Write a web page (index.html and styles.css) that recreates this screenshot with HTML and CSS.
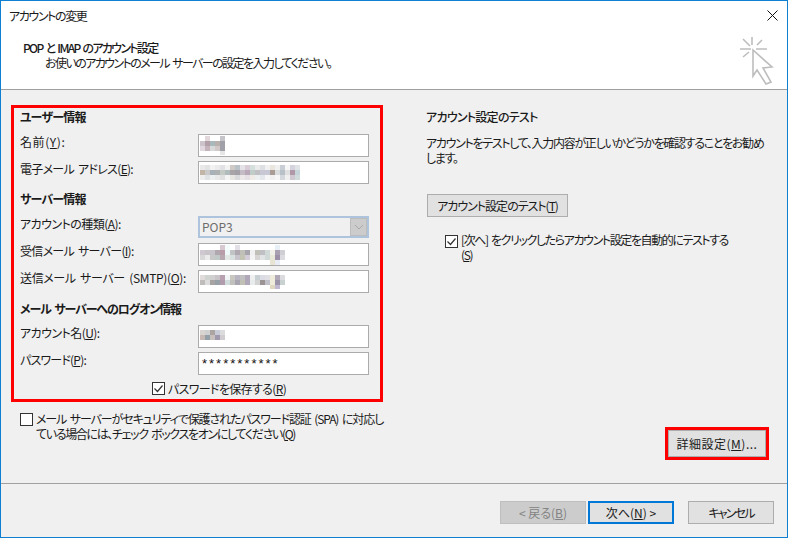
FILE: index.html
```html
<!DOCTYPE html>
<html lang="ja">
<head>
<meta charset="utf-8">
<title>アカウントの変更</title>
<link rel="stylesheet" href="styles.css">
</head>
<body>
<div class="window">
  <div class="titlebar">
    <span class="title-text">アカウントの変更</span>
    <svg class="close" width="11" height="11" viewBox="0 0 11 11"><path d="M.5.5l10 10M10.5.5l-10 10" stroke="#111" stroke-width="1" fill="none"/></svg>
  </div>
  <div class="header">
    <div class="header-text">
      <div class="header-title">POP と IMAP のアカウント設定</div>
      <div class="header-sub">お使いのアカウントのメール サーバーの設定を入力してください。</div>
    </div>
    <svg class="wizard-icon" width="36" height="52" viewBox="0 0 36 52" fill="none" stroke="#bdbdbd" stroke-width="1.6">
      <path d="M2 14h11M18 14h11M14 2v8M24 5l-5 5M5 4l7 7M5 22l6-5"/>
      <path d="M15 15v26l4-6 9 14 5-2-8-14 9-1z"/>
    </svg>
  </div>
  <div class="body">
    <div class="left">
      <div class="redbox">
        <div class="section first">ユーザー情報</div>
        <div class="row">
          <label class="wide">名前(<u>Y</u>):</label>
          <div class="field"><svg class="blur" width="30" height="20" viewBox="0 0 30 20">
            <path fill="#e2d8dc" d="M5 0h5v5H5z"/><path fill="#c4c4c9" d="M20 0h5v5h-5z"/>
            <path fill="#cdc3ca" d="M0 5h5v5H0z"/><path fill="#b39fa7" d="M5 5h5v5H5z"/><path fill="#a9b8ba" d="M10 5h5v5h-5z"/><path fill="#b9b1ad" d="M15 5h5v5h-5z"/><path fill="#a0a0a8" d="M20 5h5v5h-5z"/>
            <path fill="#e0d8de" d="M0 10h5v5H0z"/><path fill="#c4b3ba" d="M5 10h5v5H5z"/><path fill="#d8d9d9" d="M10 10h5v5h-5z"/><path fill="#d0c9c7" d="M15 10h5v5h-5z"/><path fill="#a0a0a8" d="M20 10h5v5h-5z"/>
            <path fill="#e6e6e6" d="M20 15h5v4h-5z"/></svg></div>
        </div>
        <div class="row">
          <label class="sp">電子メール アドレス(<u>E</u>):</label>
          <div class="field"><svg class="blur" width="100" height="20" viewBox="0 0 100 20">
            <path fill="#e9e9e9" d="M0 2h5v5H0z"/><path fill="#e2e4e4" d="M5 2h5v5H5z"/><path fill="#f2f2f2" d="M10 2h5v5h-5z"/><path fill="#ebebeb" d="M15 2h5v5h-5z"/><path fill="#e2e2e6" d="M20 2h5v5h-5z"/><path fill="#f2f2f2" d="M25 2h5v5h-5z"/><path fill="#cfcac5" d="M30 2h5v5h-5z"/><path fill="#b9c2c6" d="M35 2h5v5h-5z"/><path fill="#e4e2e6" d="M40 2h5v5h-5z"/><path fill="#d8ccd6" d="M45 2h5v5h-5z"/><path fill="#d5e0dc" d="M50 2h5v5h-5z"/><path fill="#ebebeb" d="M55 2h5v5h-5z"/><path fill="#dddfe3" d="M60 2h5v5h-5z"/><path fill="#f0f0f0" d="M65 2h5v5h-5z"/><path fill="#eae5de" d="M70 2h5v5h-5z"/><path fill="#f0f0f0" d="M75 2h5v5h-5z"/><path fill="#c8ced4" d="M80 2h5v5h-5z"/><path fill="#f6f6f6" d="M85 2h5v5h-5z"/><path fill="#d5d3dd" d="M90 2h5v5h-5z"/><path fill="#e0e4e6" d="M95 2h5v5h-5z"/>
            <path fill="#c3b5a5" d="M0 7h5v5H0z"/><path fill="#c9c9c9" d="M5 7h5v5H5z"/><path fill="#a8b0b8" d="M10 7h5v5h-5z"/><path fill="#aeb2b2" d="M15 7h5v5h-5z"/><path fill="#c4cac4" d="M20 7h5v5h-5z"/><path fill="#b0bcbc" d="M25 7h5v5h-5z"/><path fill="#a8a4a8" d="M30 7h5v5h-5z"/><path fill="#a4a0a8" d="M35 7h5v5h-5z"/><path fill="#c4bcc4" d="M40 7h5v5h-5z"/><path fill="#b8a8b8" d="M45 7h5v5h-5z"/><path fill="#c0ccc8" d="M50 7h5v5h-5z"/><path fill="#c0c0c4" d="M55 7h5v5h-5z"/><path fill="#c8c8d4" d="M60 7h5v5h-5z"/><path fill="#c8c8d4" d="M65 7h5v5h-5z"/><path fill="#a89c94" d="M70 7h5v5h-5z"/><path fill="#d8dcdc" d="M75 7h5v5h-5z"/><path fill="#b8c0c8" d="M80 7h5v5h-5z"/><path fill="#e0e0e0" d="M85 7h5v5h-5z"/><path fill="#b098a8" d="M90 7h5v5h-5z"/><path fill="#c4d4d8" d="M95 7h5v5h-5z"/>
            <path fill="#eeeeee" d="M0 12h5v5H0z"/><path fill="#dfe3e3" d="M5 12h5v5H5z"/><path fill="#ecefef" d="M10 12h5v5h-5z"/><path fill="#e8e8e8" d="M15 12h5v5h-5z"/><path fill="#e0e0e0" d="M20 12h5v5h-5z"/><path fill="#f4f4f4" d="M25 12h5v5h-5z"/><path fill="#e8e6e2" d="M30 12h5v5h-5z"/><path fill="#d8dadc" d="M35 12h5v5h-5z"/><path fill="#ece8e8" d="M40 12h5v5h-5z"/><path fill="#e4e0e4" d="M45 12h5v5h-5z"/><path fill="#f0ebe6" d="M50 12h5v5h-5z"/><path fill="#ecf0f0" d="M55 12h5v5h-5z"/><path fill="#e4e8ec" d="M60 12h5v5h-5z"/><path fill="#f6f6f6" d="M65 12h5v5h-5z"/><path fill="#f0f0f0" d="M70 12h5v5h-5z"/><path fill="#f6f6f6" d="M75 12h5v5h-5z"/><path fill="#d4d8dc" d="M80 12h5v5h-5z"/><path fill="#f0f0f0" d="M85 12h5v5h-5z"/><path fill="#d0c8d0" d="M90 12h5v5h-5z"/><path fill="#d0dcdc" d="M95 12h5v5h-5z"/>
          </svg></div>
        </div>
        <div class="section">サーバー情報</div>
        <div class="row">
          <label>アカウントの種類(<u>A</u>):</label>
          <div class="combo"><span>POP3</span><span class="combo-arrow"><svg width="10" height="6" viewBox="0 0 10 6"><path d="M1 1l4 4 4-4" stroke="#a9a9a9" fill="none"/></svg></span></div>
        </div>
        <div class="row">
          <label class="sp">受信メール サーバー(<u>I</u>):</label>
          <div class="field"><svg class="blur" width="90" height="20" viewBox="0 0 90 20">
            <path fill="#d8c8d0" d="M20 0h5v5h-5z"/><path fill="#f4fbfb" d="M25 0h5v5h-5z"/><path fill="#e4e0e8" d="M35 0h5v5h-5z"/><path fill="#e8f0f6" d="M75 0h5v5h-5z"/>
            <path fill="#d0c8d0" d="M0 5h5v5H0z"/><path fill="#c8c4c8" d="M5 5h5v5H5z"/><path fill="#c8c4cc" d="M10 5h5v5h-5z"/><path fill="#b0a8ae" d="M15 5h5v5h-5z"/><path fill="#b89ca8" d="M20 5h5v5h-5z"/><path fill="#eef8f8" d="M25 5h5v5h-5z"/><path fill="#c0c4c4" d="M30 5h5v5h-5z"/><path fill="#b0a8b0" d="M35 5h5v5h-5z"/><path fill="#c0c0b8" d="M40 5h5v5h-5z"/><path fill="#a8a4ac" d="M45 5h5v5h-5z"/><path fill="#f0f0f0" d="M50 5h5v5h-5z"/><path fill="#c0c0b8" d="M55 5h5v5h-5z"/><path fill="#c0c0c4" d="M60 5h5v5h-5z"/><path fill="#d0d8d8" d="M65 5h5v5h-5z"/><path fill="#f0f0e8" d="M70 5h5v5h-5z"/><path fill="#a8a0b0" d="M75 5h5v5h-5z"/><path fill="#d0d0d4" d="M80 5h5v5h-5z"/>
            <path fill="#d8d8d8" d="M0 10h5v5H0z"/><path fill="#ecebec" d="M5 10h5v5H5z"/><path fill="#c8c8c8" d="M10 10h5v5h-5z"/><path fill="#c0c8c8" d="M15 10h5v5h-5z"/><path fill="#b8a8b0" d="M20 10h5v5h-5z"/><path fill="#e4e8e4" d="M25 10h5v5h-5z"/><path fill="#d8e0e0" d="M30 10h5v5h-5z"/><path fill="#c8c4cc" d="M35 10h5v5h-5z"/><path fill="#c4c4b4" d="M40 10h5v5h-5z"/><path fill="#d4ccd8" d="M45 10h5v5h-5z"/><path fill="#f4f4f4" d="M50 10h5v5h-5z"/><path fill="#d8d4d4" d="M55 10h5v5h-5z"/><path fill="#e0e4e4" d="M60 10h5v5h-5z"/><path fill="#d0d8d8" d="M65 10h5v5h-5z"/><path fill="#e8e8d8" d="M70 10h5v5h-5z"/><path fill="#9c90a8" d="M75 10h5v5h-5z"/><path fill="#dcdce0" d="M80 10h5v5h-5z"/>
            <path fill="#e8e4d4" d="M70 15h5v5h-5z"/><path fill="#e8ecf4" d="M75 15h5v5h-5z"/>
          </svg></div>
        </div>
        <div class="row">
          <label class="tight">送信メール サーバー (SMTP)(<u>O</u>):</label>
          <div class="field"><svg class="blur" width="90" height="20" viewBox="0 0 90 20">
            <path fill="#e0dcdc" d="M0 3h5v5H0z"/><path fill="#d0d4d0" d="M5 3h5v5H5z"/><path fill="#d0d0d0" d="M10 3h5v5h-5z"/><path fill="#c8c4c8" d="M15 3h5v5h-5z"/><path fill="#b8a0b0" d="M20 3h5v5h-5z"/><path fill="#f0f4f4" d="M25 3h5v5h-5z"/><path fill="#c8c8c0" d="M30 3h5v5h-5z"/><path fill="#b8b4c0" d="M35 3h5v5h-5z"/><path fill="#c0c0c0" d="M40 3h5v5h-5z"/><path fill="#b0a8b8" d="M45 3h5v5h-5z"/><path fill="#f0f0f0" d="M50 3h5v5h-5z"/><path fill="#c8d0d4" d="M55 3h5v5h-5z"/><path fill="#dcdce4" d="M60 3h5v5h-5z"/><path fill="#e0e0e4" d="M65 3h5v5h-5z"/><path fill="#f0ecdc" d="M70 3h5v5h-5z"/><path fill="#b0a8b4" d="M75 3h5v5h-5z"/><path fill="#dcdce0" d="M80 3h5v5h-5z"/>
            <path fill="#c0bcbc" d="M0 8h5v5H0z"/><path fill="#dcdcdc" d="M5 8h5v5H5z"/><path fill="#a8a4a4" d="M10 8h5v5h-5z"/><path fill="#98a0a8" d="M15 8h5v5h-5z"/><path fill="#b09cac" d="M20 8h5v5h-5z"/><path fill="#d0dcdc" d="M25 8h5v5h-5z"/><path fill="#c0c0bc" d="M30 8h5v5h-5z"/><path fill="#a8a4b0" d="M35 8h5v5h-5z"/><path fill="#c0c0b4" d="M40 8h5v5h-5z"/><path fill="#b0a8b8" d="M45 8h5v5h-5z"/><path fill="#e8ecec" d="M50 8h5v5h-5z"/><path fill="#d4d4d4" d="M55 8h5v5h-5z"/><path fill="#9c9494" d="M60 8h5v5h-5z"/><path fill="#c0c0c8" d="M65 8h5v5h-5z"/><path fill="#f0ecdc" d="M70 8h5v5h-5z"/><path fill="#9c94a8" d="M75 8h5v5h-5z"/><path fill="#c8d0d0" d="M80 8h5v5h-5z"/>
            <path fill="#e0d8c0" d="M70 13h5v4h-5z"/><path fill="#c0b8d0" d="M75 13h5v4h-5z"/>
          </svg></div>
        </div>
        <div class="section logon">メール サーバーへのログオン情報</div>
        <div class="row">
          <label>アカウント名(<u>U</u>):</label>
          <div class="field"><svg class="blur" width="30" height="20" viewBox="0 0 30 20">
            <path fill="#d8d4d0" d="M0 3h5v5H0z"/><path fill="#d0d0d0" d="M5 3h5v5H5z"/><path fill="#aca4a0" d="M10 3h5v5h-5z"/><path fill="#c8ccd8" d="M15 3h5v5h-5z"/><path fill="#dcdcdc" d="M20 3h5v5h-5z"/>
            <path fill="#c8b8b4" d="M0 8h5v5H0z"/><path fill="#94a0a8" d="M5 8h5v5H5z"/><path fill="#c8c0bc" d="M10 8h5v5h-5z"/><path fill="#a098ac" d="M15 8h5v5h-5z"/><path fill="#d0ccd0" d="M20 8h5v5h-5z"/>
          </svg></div>
        </div>
        <div class="row">
          <label class="pw">パスワード(<u>P</u>):</label>
          <div class="field password">***********</div>
        </div>
        <div class="save">
          <svg class="check" width="13" height="13" viewBox="0 0 13 13"><rect x=".5" y=".5" width="12" height="12" fill="#fff" stroke="#333"/><path d="M2.5 6.5l3 3 5-6" stroke="#333" stroke-width="1.2" fill="none"/></svg>
          <span>パスワードを保存する(<u>R</u>)</span>
        </div>
      </div>
      <div class="spa">
        <svg class="check" width="13" height="13" viewBox="0 0 13 13"><rect x=".5" y=".5" width="12" height="12" fill="#fff" stroke="#333"/></svg>
        <div><div class="spa-1">メール サーバーがセキュリティで保護されたパスワード認証 (SPA) に対応し</div><div class="spa-2">ている場合には、チェック ボックスをオンにしてください(<u>Q</u>)</div></div>
      </div>
    </div>
    <div class="right">
      <div class="right-title">アカウント設定のテスト</div>
      <p class="desc">アカウントをテストして、入力内容が正しいかどうかを確認することをお勧め<br>します。</p>
      <button class="btn test-btn">アカウント設定のテスト(<u>T</u>)</button>
      <div class="auto">
        <svg class="check" width="13" height="13" viewBox="0 0 13 13"><rect x=".5" y=".5" width="12" height="12" fill="#fff" stroke="#333"/><path d="M2.5 6.5l3 3 5-6" stroke="#333" stroke-width="1.2" fill="none"/></svg>
        <span>[次へ] をクリックしたらアカウント設定を自動的にテストする<br>(<u>S</u>)</span>
      </div>
      <div class="spacer"></div>
      <div class="adv-wrap"><button class="btn adv-btn">詳細設定(<u>M</u>)...</button></div>
    </div>
  </div>
  <div class="footer">
    <button class="btn foot disabled">&lt; 戻る(<u>B</u>)</button>
    <button class="btn foot default">次へ(<u>N</u>) &gt;</button>
    <button class="btn foot cancel">キャンセル</button>
  </div>
</div>
</body>
</html>
```
FILE: styles.css
```css
* { box-sizing: border-box; }
html, body { margin: 0; padding: 0; }
body {
  width: 788px; height: 538px; overflow: hidden;
  font-family: "Noto Sans CJK JP", "Noto Sans", sans-serif;
  font-size: 12px; line-height: 15px; color: #1a1a1a;
  font-feature-settings: "palt";
  white-space: nowrap;
  word-spacing: 2px;
}
.window {
  width: 788px; height: 538px;
  border: 1px solid #0f7fd4;
  background: #f0f0f0;
  display: flex; flex-direction: column;
}
.titlebar {
  height: 29px; background: #fff;
  display: flex; align-items: center; justify-content: space-between;
  padding: 0 9px 1px 8px;
  flex: none;
}
.title-text { letter-spacing: -1.4px; }
.close { display: block; }
.header {
  height: 60px; background: #fff;
  border-bottom: 1px solid #a0a0a0;
  display: flex; justify-content: space-between;
  padding: 10px 13px 0 22px;
  flex: none;
}
.header-title { font-weight: 500; letter-spacing: -1.7px; }
.header-sub { padding-left: 22px; letter-spacing: -1.57px; }
.wizard-icon { margin-top: -5px; }
.body { flex: 1; display: flex; min-height: 0; }
.left { width: 425px; padding: 15px 0 0 10px; flex: none; }
.redbox {
  width: 372px; height: 297px;
  border: 3px solid #f00;
  padding: 0 11px 0 6px;
}
.section { font-weight: 700; height: 32px; display: flex; align-items: flex-end; padding-bottom: 10px; letter-spacing: -0.8px; }
.section.first { height: 26px; padding-bottom: 10px; }
.section.logon { letter-spacing: -1.1px; padding-bottom: 9px; }
.row { display: flex; align-items: flex-start; justify-content: space-between; height: 23px; margin-bottom: 4px; }
.row + .section { margin-top: -4px; }
.row label { letter-spacing: -0.55px; }
.row label.wide { letter-spacing: 0.6px; }
.row label.sp { letter-spacing: -0.7px; }
.row label.tight { letter-spacing: -0.35px; }
.row label.pw { letter-spacing: -0.8px; }
.field {
  width: 171px; height: 23px; background: #fff;
  border: 1px solid #ababab; flex: none;
  padding: 3px;
}
.blur { display: block; margin: -2px 0 0 -2px; }
.password { letter-spacing: 2px; color: #111; font-family: "Liberation Sans", sans-serif; font-size: 13px; }
.combo {
  width: 171px; height: 22px; background: #f0f0f0;
  border: 2px solid #adc4dc; flex: none;
  display: flex; justify-content: space-between; color: #6d6d6d;
  padding-left: 2px; line-height: 17px;
}
.combo-arrow {
  width: 17px; background: #cccccc; border: 1px solid #bdbdbd;
  display: flex; align-items: center; justify-content: center;
}
.save { display: flex; justify-content: center; align-items: center; gap: 3px; height: 18px; padding-left: 49px; letter-spacing: -0.65px; }
.check { flex: none; display: block; }
.spa { display: flex; gap: 3px; margin: 9px 0 0 9px; align-items: flex-start; }
.spa .check { margin-top: 2px; }
.spa-1 { letter-spacing: -1.1px; }
.spa-2 { letter-spacing: -1.33px; }
.right { flex: 1; min-width: 0; padding: 19px 18px 0 0; display: flex; flex-direction: column; align-items: flex-start; }
.right-title { font-weight: 500; letter-spacing: -0.73px; }
.desc { margin: 11px 0 0; letter-spacing: -1.3px; }
.btn {
  font: inherit; color: inherit; background: #e1e1e1;
  border: 1px solid #adadad; padding: 0; border-radius: 0;
}
.test-btn { width: 141px; height: 23px; margin: 29px 0 0 1px; letter-spacing: -1px; }
.auto { display: flex; gap: 3px; margin: 15px 0 0 19px; align-items: flex-start; letter-spacing: -1.4px; }
.auto .check { margin-top: 3px; }
.spacer { flex: 1; }
.adv-wrap {
  align-self: flex-end;
  border: 3px solid #f00; margin: 0 0 23px 0;
  width: 104px; height: 33px;
}
.adv-btn { width: 100%; height: 100%; letter-spacing: 0.5px; }
.footer {
  flex: none; height: 54px;
  border-top: 1px solid #a0a0a0;
  display: flex; align-items: flex-start;
  padding: 17px 13px 0 499px;
  gap: 2px;
}
.foot { width: 86px; height: 23px; }
.disabled { background: #ccc; border-color: #bfbfbf; color: #838383; }
.default { border: 2px solid #0078d7; }
.cancel { margin-left: 12px; letter-spacing: -1.8px; }
```
